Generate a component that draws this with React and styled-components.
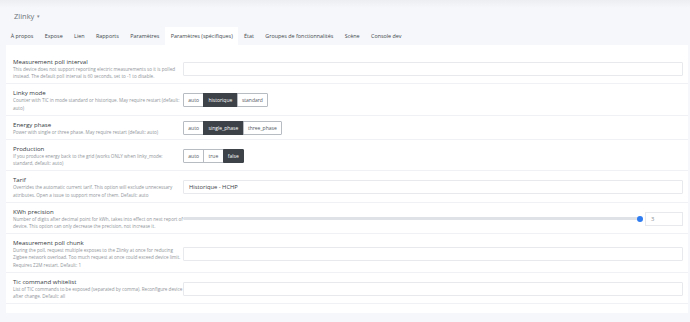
import React from "react";
import styled, { createGlobalStyle } from "styled-components";

const GlobalStyle = createGlobalStyle`
  html, body {
    margin: 0;
    padding: 0;
    background: #f6f7fa;
    font-family: "Open Sans", "Noto Sans", sans-serif;
  }
`;

const tabs = [
  "À propos",
  "Expose",
  "Lien",
  "Rapports",
  "Paramètres",
  "Paramètres (spécifiques)",
  "État",
  "Groupes de fonctionnalités",
  "Scène",
  "Console dev",
];

const settings = [
  {
    title: "Measurement poll interval",
    desc: "This device does not support reporting electric measurements so it is polled instead. The default poll interval is 60 seconds, set to -1 to disable.",
    kind: "input",
  },
  {
    title: "Linky mode",
    desc: "Counter with TIC in mode standard or historique. May require restart (default: auto)",
    kind: "toggle",
    options: ["auto", "historique", "standard"],
    value: "historique",
  },
  {
    title: "Energy phase",
    desc: "Power with single or three phase. May require restart (default: auto)",
    kind: "toggle",
    options: ["auto", "single_phase", "three_phase"],
    value: "single_phase",
  },
  {
    title: "Production",
    desc: "If you produce energy back to the grid (works ONLY when linky_mode: standard, default: auto)",
    kind: "toggle",
    options: ["auto", "true", "false"],
    value: "false",
  },
  {
    title: "Tarif",
    desc: "Overrides the automatic current tarif. This option will exclude unnecessary attributes. Open a issue to support more of them. Default: auto",
    kind: "select",
    value: "Historique - HCHP",
  },
  {
    title: "KWh precision",
    desc: "Number of digits after decimal point for kWh, takes into effect on next report of device. This option can only decrease the precision, not increase it.",
    kind: "range",
    value: 3,
    max: 3,
  },
  {
    title: "Measurement poll chunk",
    desc: "During the poll, request multiple exposes to the Zlinky at once for reducing Zigbee network overload. Too much request at once could exceed device limit. Requires Z2M restart. Default: 1",
    kind: "input",
  },
  {
    title: "Tic command whitelist",
    desc: "List of TIC commands to be exposed (separated by comma). Reconfigure device after change. Default: all",
    kind: "input",
  },
];

function Control({ item }) {
  if (item.kind === "toggle") {
    return (
      <ButtonGroup>
        {item.options.map((o) => (
          <GroupButton key={o} $active={o === item.value}>
            {o}
          </GroupButton>
        ))}
      </ButtonGroup>
    );
  }
  if (item.kind === "range") {
    const pct = (item.value / item.max) * 100;
    return (
      <RangeWrap>
        <Track>
          <Thumb style={{ left: `${pct}%` }} />
        </Track>
        <NumberBox>{item.value}</NumberBox>
      </RangeWrap>
    );
  }
  return <TextBox>{item.value || ""}</TextBox>;
}

function App() {
  return (
    <Page>
      <GlobalStyle />
      <TopShade />
      <DeviceName>
        Zlinky <Caret>▾</Caret>
      </DeviceName>
      <TabBar>
        {tabs.map((t) => (
          <Tab key={t} $active={t === "Paramètres (spécifiques)"}>
            {t}
          </Tab>
        ))}
      </TabBar>
      <Card>
        {settings.map((s) => (
          <Row key={s.title}>
            <Label>
              <Title>{s.title}</Title>
              <Desc>{s.desc}</Desc>
            </Label>
            <Control item={s} />
          </Row>
        ))}
      </Card>
    </Page>
  );
}

export default App;

const Page = styled.div`
  width: 690px;
  min-height: 322px;
  background: #f6f7fa;
`;

const TopShade = styled.div`
  height: 8px;
  background: linear-gradient(#eceef1, #f6f7fa);
`;

const DeviceName = styled.div`
  height: 19px;
  padding-left: 14px;
  display: flex;
  align-items: center;
  font-size: 7.5px;
  color: #6c737a;
  margin-top: -2px;
  margin-bottom: 2px;
`;

const Caret = styled.span`
  font-size: 5px;
  margin-left: 3px;
  color: #858b91;
`;

const TabBar = styled.div`
  display: flex;
  padding-left: 5px;
  height: 18px;
`;

const Tab = styled.div`
  padding: 0 5.7px;
  line-height: 18px;
  font-size: 5.4px;
  color: #41474d;
  white-space: nowrap;
  background: ${(p) => (p.$active ? "#ffffff" : "transparent")};
`;

const Card = styled.div`
  margin: 0 2px 0 6px;
  background: #ffffff;
  padding: 8px 0 9px;
`;

const Row = styled.div`
  display: grid;
  grid-template-columns: 170px 1fr;
  align-items: center;
  padding: 4px 5px 3px 7px;
  border-bottom: 1px solid #eff1f4;
`;

const Label = styled.div`
  display: flex;
  flex-direction: column;
`;

const Title = styled.div`
  font-size: 6.1px;
  line-height: 9px;
  font-weight: 500;
  color: #34393e;
`;

const Desc = styled.div`
  width: 170px;
  font-size: 4.6px;
  line-height: 7.2px;
  color: #90959a;
`;

const TextBox = styled.div`
  height: 12px;
  border: 1px solid #e7e9ec;
  border-radius: 1px;
  padding-left: 5px;
  font-size: 5.8px;
  line-height: 12px;
  color: #3b4046;
`;

const ButtonGroup = styled.div`
  display: flex;
  height: 14px;
  justify-self: start;
`;

const GroupButton = styled.div`
  padding: 0 4.3px;
  font-size: 5px;
  line-height: 12px;
  border: 1px solid ${(p) => (p.$active ? "#3c4248" : "#b6bcc2")};
  margin-left: -1px;
  color: ${(p) => (p.$active ? "#ffffff" : "#51575d")};
  background: ${(p) => (p.$active ? "#3c4248" : "#ffffff")};
  &:first-child {
    margin-left: 0;
    border-radius: 1px 0 0 1px;
  }
  &:last-child {
    border-radius: 0 1px 1px 0;
  }
`;

const RangeWrap = styled.div`
  display: flex;
  align-items: center;
  gap: 5px;
`;

const Track = styled.div`
  position: relative;
  flex: 1;
  height: 3px;
  border-radius: 2px;
  background: #dfe3e8;
`;

const Thumb = styled.div`
  position: absolute;
  top: 50%;
  width: 6px;
  height: 6px;
  margin: -3px 0 0 -3px;
  border-radius: 50%;
  background: #2f7cf0;
`;

const NumberBox = styled.div`
  width: 31px;
  height: 12px;
  border: 1px solid #e7e9ec;
  padding-left: 5px;
  font-size: 5.8px;
  line-height: 12px;
  color: #8a9096;
`;
